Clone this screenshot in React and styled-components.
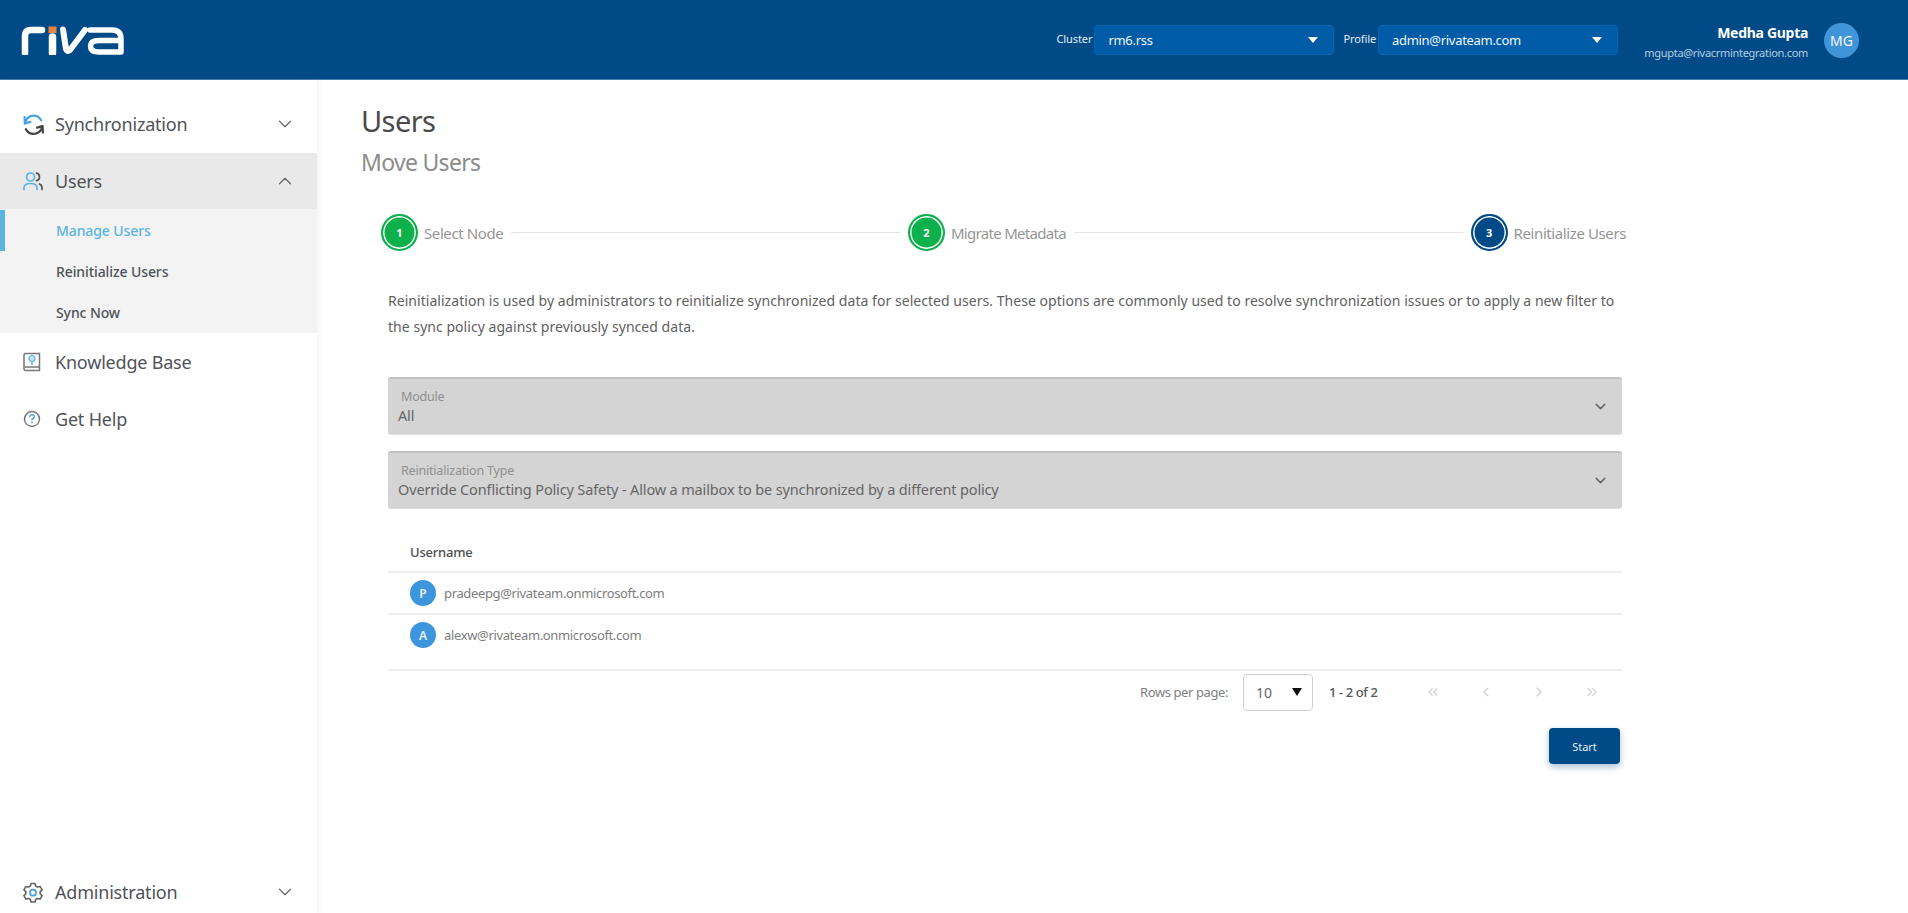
import React from 'react'
import styled, { createGlobalStyle } from 'styled-components'
import {
  ChevronDown,
  ChevronUp,
  ChevronLeft,
  ChevronRight,
  ChevronsLeft,
  ChevronsRight,
} from 'lucide-react'

const GlobalStyle = createGlobalStyle`
  html, body { margin: 0; padding: 0; background: #fff; }
  body { font-family: "Noto Sans", "Open Sans", sans-serif; color: #555; overflow: hidden; }
  * { box-sizing: border-box; }
`

const Logo = () => (
  <svg width="104" height="30" viewBox="0 0 104 30" fill="none">
    <path d="M4 28V11Q4 5 10 5H21" stroke="#fff" strokeWidth="6.5" strokeLinecap="round" />
    <rect x="27.5" y="1.5" width="8" height="6.5" fill="#e9833f" />
    <path d="M31.5 12V28" stroke="#fff" strokeWidth="7.5" strokeLinecap="round" />
    <path d="M42 4.5L45 24Q46 27.5 49 25L64 5" stroke="#fff" strokeWidth="6" strokeLinecap="round" strokeLinejoin="round" />
    <path d="M69 5H91Q100 5 100 14V27H78Q69.5 27 69.5 21Q69.5 15.5 78 15.5H99" stroke="#fff" strokeWidth="5.5" strokeLinecap="round" strokeLinejoin="round" />
  </svg>
)

const SyncIcon = () => (
  <svg width="23" height="23" viewBox="0 0 22 22" fill="none" strokeWidth="2.2" strokeLinecap="round" strokeLinejoin="round">
    <path d="M2.8 10C3.5 5.5 7 2.500 11 2.500c3.200 0 5.800 1.700 7.300 4.500" stroke="#4aa3df" />
    <path d="M2.500 4 2.800 10 8 8.500" stroke="#4aa3df" />
    <path d="M19.500 12.500C18.800 17 15 20 11 20c-3.200 0-5.800-1.700-7.300-4.500" stroke="#444" />
    <path d="M20 18.500 19.500 12.500 14.500 14" stroke="#444" />
  </svg>
)

const UsersIcon = () => (
  <svg width="22" height="22" viewBox="0 0 22 22" fill="none" strokeWidth="1.7" strokeLinecap="round">
    <circle cx="8.5" cy="7" r="4" stroke="#5cb3e4" />
    <path d="M2 19.500v-1.500c0-3 2.500-4.500 6.500-4.500s6.500 1.500 6.500 4.500v1.500" stroke="#5cb3e4" />
    <path d="M14.500 3.200c2 .4 3 1.900 3 3.800s-1 3.300-3 3.700" stroke="#555" />
    <path d="M17.500 14c1.600.7 2.500 2 2.500 3.700v1.800" stroke="#555" />
  </svg>
)

const BookIcon = () => (
  <svg width="20" height="22" viewBox="0 0 20 22" fill="none">
    <path d="M3 2.500h14.500v17H3.500C2.500 19.500 2 18.700 2 18V4c0-.9.5-1.500 1-1.500z" stroke="#777" strokeWidth="1.5" />
    <path d="M2.500 16h15" stroke="#777" strokeWidth="1.5" />
    <circle cx="10" cy="7.5" r="3" fill="#bfe2f5" stroke="#5cb3e4" strokeWidth="1.2" />
    <path d="M10 10.500v3.500" stroke="#5cb3e4" strokeWidth="1.5" />
  </svg>
)

const HelpIcon = () => (
  <svg width="20" height="22" viewBox="0 0 20 22" fill="none">
    <path d="M10 18.500c-4.500-.5-7.500-3.600-7.500-7.500a7.500 7.500 0 0 1 15 0c0 3.900-3 7-7.500 7.500z" stroke="#777" strokeWidth="1.5" strokeLinejoin="round" />
    <path d="M7.800 8.800c0-1.300 1-2.100 2.300-2.100s2.200.8 2.200 2c0 1.700-2.300 1.700-2.300 3.400" stroke="#4aa3df" strokeWidth="1.4" strokeLinecap="round" />
    <circle cx="10" cy="14.4" r=".9" fill="#4aa3df" />
  </svg>
)

const GearIcon = () => (
  <svg width="22" height="22" viewBox="0 0 22 22" fill="none">
    <path d="M9 2.500h4l.6 2.500 2 1.100 2.500-.7 2 3.400-1.900 1.800v2.300l1.900 1.800-2 3.400-2.500-.7-2 1.100-.6 2.500H9l-.6-2.500-2-1.100-2.500.7-2-3.400 1.900-1.800V10.600L1.900 8.800l2-3.400 2.500.7 2-1.100z" stroke="#666" strokeWidth="1.6" strokeLinejoin="round" />
    <circle cx="11" cy="11.7" r="3" stroke="#4aa3df" strokeWidth="1.8" />
  </svg>
)

const App = () => {
  const rows = [
    { initial: 'P', email: 'pradeepg@rivateam.onmicrosoft.com' },
    { initial: 'A', email: 'alexw@rivateam.onmicrosoft.com' },
  ]

  return (
    <Page>
      <GlobalStyle />
      <Header>
        <Logo />
        <HeaderRight>
          <HeaderLabel>Cluster</HeaderLabel>
          <HeaderSelect>
            <span>rm6.rss</span>
            <HeaderCaret />
          </HeaderSelect>
          <HeaderLabel className="profile">Profile</HeaderLabel>
          <HeaderSelect>
            <span>admin@rivateam.com</span>
            <HeaderCaret />
          </HeaderSelect>
          <UserBlock>
            <UserName>Medha Gupta</UserName>
            <UserMail>mgupta@rivacrmintegration.com</UserMail>
          </UserBlock>
          <HeaderAvatar>MG</HeaderAvatar>
        </HeaderRight>
      </Header>
      <Body>
        <Sidebar>
          <NavItem>
            <NavIcon><SyncIcon /></NavIcon>
            <NavText>Synchronization</NavText>
            <ChevronDown size={22} strokeWidth={1.3} color="#666" />
          </NavItem>
          <NavItem $open>
            <NavIcon><UsersIcon /></NavIcon>
            <NavText>Users</NavText>
            <ChevronUp size={22} strokeWidth={1.3} color="#666" />
          </NavItem>
          <SubMenu>
            <SubItem $active>Manage Users</SubItem>
            <SubItem>Reinitialize Users</SubItem>
            <SubItem>Sync Now</SubItem>
          </SubMenu>
          <NavItem>
            <NavIcon><BookIcon /></NavIcon>
            <NavText>Knowledge Base</NavText>
          </NavItem>
          <NavItem>
            <NavIcon><HelpIcon /></NavIcon>
            <NavText>Get Help</NavText>
          </NavItem>
          <BottomNav>
            <NavIcon><GearIcon /></NavIcon>
            <NavText>Administration</NavText>
            <ChevronDown size={22} strokeWidth={1.3} color="#666" />
          </BottomNav>
        </Sidebar>
        <Main>
          <Title>Users</Title>
          <SubTitle>Move Users</SubTitle>
          <Stepper>
            <Step>
              <StepCircle>1</StepCircle>
              <StepLabel>Select Node</StepLabel>
            </Step>
            <StepLine />
            <Step>
              <StepCircle>2</StepCircle>
              <StepLabel $tight>Migrate Metadata</StepLabel>
            </Step>
            <StepLine />
            <Step>
              <StepCircle $current>3</StepCircle>
              <StepLabel>Reinitialize Users</StepLabel>
            </Step>
          </Stepper>
          <Content>
            <Description>
              Reinitialization is used by administrators to reinitialize synchronized data for selected users. These options are commonly used to resolve synchronization issues or to apply a new filter to the sync policy against previously synced data.
            </Description>
            <FormSelect>
              <div>
                <SelectLabel>Module</SelectLabel>
                <SelectValue>All</SelectValue>
              </div>
              <ChevronDown size={17} strokeWidth={2} color="#666" />
            </FormSelect>
            <FormSelect>
              <div>
                <SelectLabel>Reinitialization Type</SelectLabel>
                <SelectValue>Override Conflicting Policy Safety - Allow a mailbox to be synchronized by a different policy</SelectValue>
              </div>
              <ChevronDown size={17} strokeWidth={2} color="#666" />
            </FormSelect>
            <Table>
              <TableHead>Username</TableHead>
              <TableBody>
                {rows.map((r) => (
                  <Row key={r.email}>
                    <RowAvatar>{r.initial}</RowAvatar>
                    <RowText>{r.email}</RowText>
                  </Row>
                ))}
              </TableBody>
            </Table>
            <Pager>
              <PagerLabel>Rows per page:</PagerLabel>
              <RowsSelect>
                <span>10</span>
                <RowsCaret />
              </RowsSelect>
              <PagerCount>1 - 2 of 2</PagerCount>
              <PagerNav>
                <ChevronsLeft size={16} strokeWidth={1.6} color="#ccc" />
                <ChevronLeft size={16} strokeWidth={1.6} color="#ccc" />
                <ChevronRight size={16} strokeWidth={1.6} color="#ccc" />
                <ChevronsRight size={16} strokeWidth={1.6} color="#ccc" />
              </PagerNav>
            </Pager>
            <Actions>
              <StartButton>Start</StartButton>
            </Actions>
          </Content>
        </Main>
      </Body>
    </Page>
  )
}

const Page = styled.div`
  width: 1908px;
  height: 913px;
  display: flex;
  flex-direction: column;
`
const Header = styled.header`
  height: 80px;
  flex: none;
  background: #004b87;
  border-bottom: 1px solid #4a80b0;
  display: flex;
  align-items: center;
  justify-content: space-between;
  padding: 0 49px 0 21px;
`
const HeaderRight = styled.div`
  display: flex;
  align-items: center;
`
const HeaderLabel = styled.span`
  font-size: 11px;
  letter-spacing: -0.1px;
  color: #e4edf5;
  margin-right: 2px;
  margin-top: -2px;
  &.profile { margin-left: 9px; }
`
const HeaderSelect = styled.div`
  width: 240px;
  height: 30px;
  background: #005ca6;
  border: 1px solid #0a64ad;
  border-radius: 4px;
  display: flex;
  align-items: center;
  justify-content: space-between;
  padding: 0 15px 0 13px;
  color: #f0f5fa;
  font-size: 13px;
  letter-spacing: -0.3px;
`
const HeaderCaret = styled.i`
  width: 0;
  height: 0;
  border-left: 5px solid transparent;
  border-right: 5px solid transparent;
  border-top: 6px solid #fff;
`
const UserBlock = styled.div`
  width: 190px;
  text-align: right;
  margin: 5px 16px 0 0;
`
const UserName = styled.div`
  font-size: 14px;
  font-weight: 700;
  letter-spacing: -0.3px;
  line-height: 20px;
  color: #fff;
`
const UserMail = styled.div`
  font-size: 11px;
  letter-spacing: -0.3px;
  line-height: 16px;
  margin-top: 2px;
  color: #b6cce0;
`
const HeaderAvatar = styled.div`
  width: 35px;
  height: 35px;
  margin-top: 2px;
  border-radius: 50%;
  background: #4094d8;
  color: #f3f8fc;
  font-size: 14px;
  display: flex;
  align-items: center;
  justify-content: center;
`
const Body = styled.div`
  flex: 1;
  display: flex;
  min-height: 0;
`
const Sidebar = styled.aside`
  width: 317px;
  flex: none;
  display: flex;
  flex-direction: column;
  background: #fff;
  box-shadow: 2px 0 6px rgba(0, 0, 0, 0.05);
`
const NavItem = styled.div`
  height: ${(p) => (p.$open ? '56px' : '57px')};
  display: flex;
  align-items: center;
  padding: 0 21px 0 22px;
  background: ${(p) => (p.$open ? '#e9e9e9' : 'transparent')};
  &:first-child { height: 73px; padding-top: 15px; }
`
const BottomNav = styled(NavItem)`
  margin-top: auto;
  height: 40px;
  padding-bottom: 2px;
`
const NavIcon = styled.span`
  width: 33px;
  display: flex;
  align-items: center;
`
const NavText = styled.span`
  flex: 1;
  font-size: 18px;
  letter-spacing: -0.2px;
  color: #4f5357;
`
const SubMenu = styled.div`
  background: #f3f3f3;
  display: flex;
  flex-direction: column;
  height: 124px;
  padding-top: 1px;
`
const SubItem = styled.div`
  height: 41px;
  display: flex;
  align-items: center;
  padding-left: ${(p) => (p.$active ? '51px' : '56px')};
  font-size: 14px;
  font-weight: 500;
  letter-spacing: -0.1px;
  color: ${(p) => (p.$active ? '#5ab4e0' : '#4f5357')};
  border-left: ${(p) => (p.$active ? '5px solid #5ab4e0' : 'none')};
`
const Main = styled.main`
  flex: 1;
  padding: 23px 0 0 44px;
`
const Title = styled.h1`
  margin: 0;
  font-size: 29px;
  font-weight: 400;
  line-height: 36px;
  letter-spacing: -0.6px;
  color: #4a4a4a;
`
const SubTitle = styled.h2`
  margin: 8px 0 0;
  font-size: 23px;
  font-weight: 400;
  line-height: 30px;
  letter-spacing: -0.7px;
  color: #8c8c8c;
`
const Stepper = styled.div`
  width: 1245px;
  margin: 37px 0 0 20px;
  display: flex;
  align-items: center;
`
const Step = styled.div`
  display: flex;
  align-items: center;
  gap: 6px;
`
const StepCircle = styled.span`
  width: 37px;
  height: 37px;
  border-radius: 50%;
  background: ${(p) => (p.$current ? '#004b87' : '#0db14b')};
  border: 2px solid ${(p) => (p.$current ? '#004b87' : '#0db14b')};
  box-shadow: inset 0 0 0 1.5px #fff;
  color: #fff;
  font-size: 11px;
  font-weight: 700;
  display: flex;
  align-items: center;
  justify-content: center;
`
const StepLabel = styled.span`
  font-size: 15px;
  letter-spacing: ${(p) => (p.$tight ? '-0.7px' : '-0.4px')};
  color: #969696;
`
const StepLine = styled.span`
  flex: 1;
  height: 1px;
  background: #e4e4e4;
  margin: 0 8px;
`
const Content = styled.div`
  width: 1234px;
  margin-left: 27px;
`
const Description = styled.p`
  margin: 37px 0 0;
  font-size: 14px;
  line-height: 26px;
  letter-spacing: 0.04px;
  color: #5f5f5f;
`
const FormSelect = styled.div`
  height: 58px;
  margin-top: 37px;
  background: #d4d4d4;
  border-radius: 3px;
  border-top: 2px solid #c2c2c2;
  border-bottom: 1px solid #dedede;
  display: flex;
  align-items: center;
  justify-content: space-between;
  padding: 0 13px 0 10px;
  & + & { margin-top: 16px; }
`
const SelectLabel = styled.div`
  font-size: 12.5px;
  line-height: 16px;
  letter-spacing: -0.2px;
  color: #8f8f8f;
  padding-left: 3px;
`
const SelectValue = styled.div`
  font-size: 14.5px;
  line-height: 20px;
  letter-spacing: -0.15px;
  color: #666;
`
const Table = styled.div`
  margin-top: 23px;
`
const TableHead = styled.div`
  height: 41px;
  border-bottom: 2px solid #eee;
  padding-left: 22px;
  display: flex;
  align-items: center;
  font-size: 13px;
  font-weight: 500;
  letter-spacing: -0.2px;
  color: #4d4d4d;
`
const TableBody = styled.div`
  border-bottom: 2px solid #eee;
  padding-bottom: 14px;
`
const Row = styled.div`
  height: 42px;
  display: flex;
  align-items: center;
  padding-left: 22px;
  gap: 8px;
  border-bottom: 2px solid #eee;
  &:last-child { border-bottom: none; height: 40px; }
`
const RowAvatar = styled.span`
  width: 26px;
  height: 26px;
  border-radius: 50%;
  background: #3d95dd;
  color: #e8f3fb;
  font-size: 12px;
  font-weight: 600;
  display: flex;
  align-items: center;
  justify-content: center;
`
const RowText = styled.span`
  font-size: 13px;
  letter-spacing: -0.35px;
  color: #7d7d7d;
`
const Pager = styled.div`
  margin-top: 2px;
  height: 38px;
  display: flex;
  align-items: center;
  padding-left: 752px;
`
const PagerLabel = styled.span`
  font-size: 13px;
  letter-spacing: -0.4px;
  color: #808080;
  width: 103px;
`
const RowsSelect = styled.div`
  width: 70px;
  height: 37px;
  border: 1px solid #d0d0d0;
  border-radius: 4px;
  display: flex;
  align-items: center;
  justify-content: space-between;
  padding: 0 10px 0 12px;
  font-size: 14px;
  color: #666;
`
const RowsCaret = styled.i`
  width: 0;
  height: 0;
  border-left: 5px solid transparent;
  border-right: 5px solid transparent;
  border-top: 8px solid #111;
`
const PagerCount = styled.span`
  margin-left: 16px;
  width: 60px;
  font-size: 13px;
  font-weight: 500;
  letter-spacing: -0.4px;
  color: #555;
`
const PagerNav = styled.div`
  margin-left: 36px;
  width: 175px;
  display: flex;
  justify-content: space-between;
`
const Actions = styled.div`
  display: flex;
  justify-content: flex-end;
  margin-top: 17px;
  padding-right: 2px;
`
const StartButton = styled.button`
  width: 71px;
  height: 36px;
  border: none;
  border-radius: 4px;
  background: #004b87;
  color: #e6eef5;
  font-family: inherit;
  font-size: 11px;
  box-shadow: 0 3px 7px rgba(0, 75, 135, 0.35);
`

export default App
